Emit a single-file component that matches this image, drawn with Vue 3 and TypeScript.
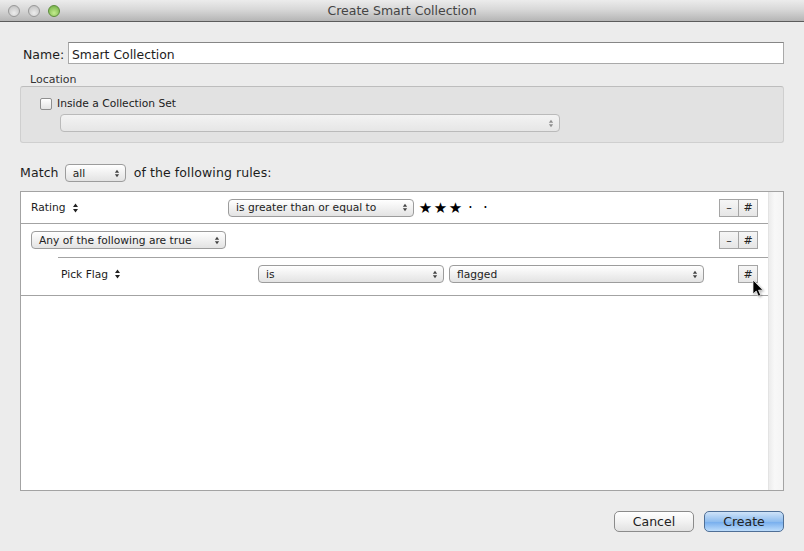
<script setup lang="ts">
interface Rule {
  field: string;
  op: string;
}

const rating: Rule = { field: "Rating", op: "is greater than or equal to" };
const pick: Rule = { field: "Pick Flag", op: "is" };
const stars = [true, true, true, false, false];
</script>

<template>
  <div class="window">
    <header class="titlebar">
      <div class="lights">
        <span class="light"></span>
        <span class="light"></span>
        <span class="light green"></span>
      </div>
      <div class="title">Create Smart Collection</div>
    </header>

    <main class="body">
      <div class="name-row">
        <label class="name-label">Name:</label>
        <div class="name-input">Smart Collection</div>
      </div>

      <div class="group-label">Location</div>
      <section class="group">
        <div class="check-row">
          <span class="checkbox"></span>
          <span>Inside a Collection Set</span>
        </div>
        <div class="select set-select disabled">
          <span></span>
          <svg class="updown" viewBox="0 0 7 10"><path d="M3.5 0.5 6 4H1zM3.5 9.5 1 6h5z" /></svg>
        </div>
      </section>

      <div class="match-row">
        <span class="match-text">Match</span>
        <div class="select match-select">
          <span>all</span>
          <svg class="updown" viewBox="0 0 7 10"><path d="M3.5 0.5 6 4H1zM3.5 9.5 1 6h5z" /></svg>
        </div>
        <span class="match-text">of the following rules:</span>
      </div>

      <section class="rules">
        <div class="rule-list">
          <div class="row row-rating">
            <div class="field field-rating">
              {{ rating.field }}
              <svg class="updown dark" viewBox="0 0 7 10"><path d="M3.5 0.5 6 4H1zM3.5 9.5 1 6h5z" /></svg>
            </div>
            <div class="select op-rating">
              <span>{{ rating.op }}</span>
              <svg class="updown" viewBox="0 0 7 10"><path d="M3.5 0.5 6 4H1zM3.5 9.5 1 6h5z" /></svg>
            </div>
            <div class="stars">
              <span v-for="(on, i) in stars" :key="i" class="star">{{ on ? "★" : "·" }}</span>
            </div>
            <div class="pair">
              <button class="mini">–</button>
              <button class="mini">#</button>
            </div>
          </div>

          <div class="row row-any">
            <div class="select any-select">
              <span>Any of the following are true</span>
              <svg class="updown" viewBox="0 0 7 10"><path d="M3.5 0.5 6 4H1zM3.5 9.5 1 6h5z" /></svg>
            </div>
            <div class="pair">
              <button class="mini">–</button>
              <button class="mini">#</button>
            </div>
          </div>

          <div class="row row-pick">
            <div class="field field-pick">
              {{ pick.field }}
              <svg class="updown dark" viewBox="0 0 7 10"><path d="M3.5 0.5 6 4H1zM3.5 9.5 1 6h5z" /></svg>
            </div>
            <div class="select op-pick">
              <span>{{ pick.op }}</span>
              <svg class="updown" viewBox="0 0 7 10"><path d="M3.5 0.5 6 4H1zM3.5 9.5 1 6h5z" /></svg>
            </div>
            <div class="select value-pick">
              <span>flagged</span>
              <svg class="updown" viewBox="0 0 7 10"><path d="M3.5 0.5 6 4H1zM3.5 9.5 1 6h5z" /></svg>
            </div>
            <div class="pair">
              <button class="mini">#</button>
            </div>
          </div>
        </div>
        <div class="gutter"></div>
      </section>

      <footer class="actions">
        <button class="push">Cancel</button>
        <button class="push default">Create</button>
      </footer>
    </main>

    <svg class="cursor" width="16" height="22" viewBox="0 0 16 22">
      <path d="M1 1v14l3.2-3 2.2 5.2 2.3-1-2.2-5H11z" fill="#000" stroke="#fff" stroke-width="0.7" />
    </svg>
  </div>
</template>

<style>
html,
body {
  margin: 0;
  background: #ececec;
}
</style>

<style scoped>
.window {
  position: relative;
  width: 804px;
  height: 551px;
  overflow: hidden;
  display: flex;
  flex-direction: column;
  background: #ececec;
  color: #1c1c1c;
  font-family: "DejaVu Sans", sans-serif;
  font-size: 12px;
}

/* Title bar */
.titlebar {
  position: relative;
  flex: none;
  height: 21px;
  display: flex;
  align-items: center;
  justify-content: center;
  background: linear-gradient(to bottom, #ececec, #d8d8d8 45%, #b5b5b5);
  border-bottom: 1px solid #5c5c5c;
}

.title {
  font-size: 12.5px;
  color: #444;
}

.lights {
  position: absolute;
  left: 8px;
  top: 5px;
  display: flex;
  gap: 8px;
}

.light {
  width: 12px;
  height: 12px;
  border-radius: 50%;
  box-sizing: border-box;
  border: 1px solid #989898;
  background: radial-gradient(circle at 50% 70%, #ececec, #bcbcbc);
}

.light.green {
  border-color: #5c8c3a;
  background: radial-gradient(circle at 50% 70%, #c4ec8e, #6aaa3e);
}

/* Form */
.body {
  flex: 1;
  display: flex;
  flex-direction: column;
  padding: 0 20px;
}

.name-row {
  display: flex;
  align-items: center;
  height: 22px;
  margin-top: 20px;
  padding-left: 3px;
}

.name-label {
  width: 45px;
  padding-top: 2px;
  font-size: 12.5px;
}

.name-input {
  flex: 1;
  box-sizing: border-box;
  height: 22px;
  line-height: 20px;
  padding: 2px 0 0 3px;
  background: #fff;
  border: 1px solid #a9a9a9;
  border-top-color: #868686;
  font-size: 12.4px;
}

.group-label {
  margin: 10px 0 0 10px;
  height: 11px;
  line-height: 11px;
  font-size: 11px;
  color: #333;
}

.group {
  box-sizing: border-box;
  height: 57px;
  margin-top: 1px;
  padding: 10px 0 0 19px;
  background: #e2e2e2;
  border: 1px solid #cfcfcf;
  border-top-color: #bdbdbd;
  border-radius: 3px;
}

.check-row {
  display: flex;
  align-items: center;
  gap: 5px;
  height: 13px;
  font-size: 10.7px;
}

.checkbox {
  box-sizing: border-box;
  width: 12px;
  height: 12px;
  border: 1px solid #8f8f8f;
  border-radius: 2px;
  background: linear-gradient(to bottom, #fff, #e4e4e4);
}

.select {
  box-sizing: border-box;
  display: flex;
  align-items: center;
  justify-content: space-between;
  height: 18px;
  padding: 0 5px 0 7px;
  border: 1px solid #9c9c9c;
  border-radius: 4px;
  background: linear-gradient(to bottom, #ffffff, #f1f1f1 50%, #e3e3e3);
  font-size: 10.7px;
  color: #222;
  white-space: nowrap;
}

.select.disabled {
  border-color: #bababa;
  background: linear-gradient(to bottom, #f3f3f3, #e6e6e6);
}

.disabled .updown {
  fill: #8e8e8e;
}

.updown {
  flex: none;
  width: 6px;
  height: 9px;
  fill: #444;
}

.updown.dark {
  width: 7px;
  height: 10px;
  margin-left: 6px;
  fill: #222;
}

.field-rating .updown.dark {
  margin-left: 7px;
}

.set-select {
  width: 500px;
  margin: 4px 0 0 20px;
}

.match-row {
  display: flex;
  align-items: center;
  height: 18px;
  margin-top: 21px;
  font-size: 12.5px;
  letter-spacing: 0.1px;
}

.match-text {
  padding-bottom: 2px;
}

.match-select {
  width: 61px;
  margin: 0 8px 0 6px;
  letter-spacing: 0;
}

/* Rules table */
.rules {
  box-sizing: border-box;
  display: flex;
  height: 300px;
  margin-top: 9px;
  background: #fff;
  border: 1px solid #a3a3a3;
}

.rule-list {
  flex: 1;
  display: flex;
  flex-direction: column;
}

.gutter {
  flex: none;
  width: 15px;
  background: linear-gradient(to right, #ececec, #f8f8f8 40%, #f4f4f4);
  border-left: 1px solid #e3e3e3;
  box-sizing: border-box;
}

.row {
  position: relative;
  display: flex;
  align-items: center;
  box-sizing: border-box;
  font-size: 10.7px;
  border-bottom: 1px solid #a3a3a3;
}

.row-rating {
  height: 32px;
}

.row-any {
  height: 33px;
  padding: 0 0 1px 10px;
  border-bottom: none;
}

.row-pick {
  height: 39px;
  padding-left: 40px;
  padding-bottom: 4px;
}

.row-pick::before {
  content: "";
  position: absolute;
  top: 0;
  left: 37px;
  right: 0;
  border-top: 1px solid #a3a3a3;
}

.field {
  display: flex;
  align-items: center;
  white-space: nowrap;
}

.field-rating {
  width: 207px;
  padding-left: 10px;
  box-sizing: border-box;
}

.field-pick {
  width: 197px;
}

.op-rating {
  width: 186px;
}

.any-select {
  width: 195px;
}

.op-pick {
  width: 186px;
}

.value-pick {
  width: 255px;
  margin-left: 5px;
}

.stars {
  display: flex;
  align-items: center;
  margin-left: 4px;
  color: #000;
}

.star {
  width: 15px;
  text-align: center;
  font-size: 15px;
}

.pair {
  margin-left: auto;
  margin-right: 10px;
  display: flex;
}

.mini {
  box-sizing: border-box;
  width: 20px;
  height: 18px;
  padding: 0;
  margin-left: -1px;
  border: 1px solid #a5a5a5;
  background: linear-gradient(to bottom, #f6f6f6, #e6e6e6);
  font-family: inherit;
  font-size: 11px;
  color: #222;
}

/* Footer buttons */
.actions {
  display: flex;
  justify-content: flex-end;
  gap: 10px;
  margin-top: 20px;
}

.push {
  box-sizing: border-box;
  width: 80px;
  height: 21px;
  padding: 0;
  border: 1px solid #8b8b8b;
  border-radius: 5px;
  background: linear-gradient(to bottom, #ffffff, #f2f2f2 50%, #e2e2e2);
  font-family: inherit;
  font-size: 12.5px;
  color: #222;
}

.push.default {
  border-color: #4f6f96;
  background: linear-gradient(to bottom, #cfe3f8, #8fbdef 50%, #7ab0ee 55%, #bcdcfb);
}

.cursor {
  position: absolute;
  left: 752px;
  top: 279px;
  filter: drop-shadow(1px 1px 1px rgba(0, 0, 0, 0.3));
}
</style>
